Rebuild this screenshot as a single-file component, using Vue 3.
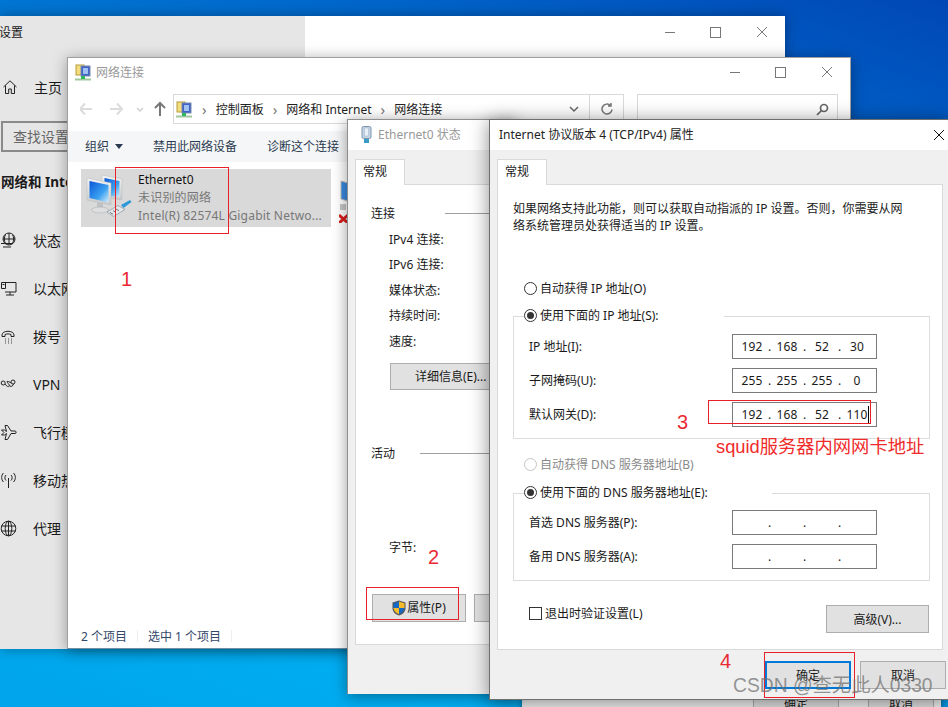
<script setup>
const navItems = [
  { label: '状态', icon: 'status' },
  { label: '以太网', icon: 'eth' },
  { label: '拨号', icon: 'dial' },
  { label: 'VPN', icon: 'vpn' },
  { label: '飞行模式', icon: 'plane' },
  { label: '移动热点', icon: 'hot' },
  { label: '代理', icon: 'globe' },
]
const statusRows = ['IPv4 连接:', 'IPv6 连接:', '媒体状态:', '持续时间:', '速度:']
const ipRows = [
  { label: 'IP 地址(I):', parts: ['192', '168', '52', '30'] },
  { label: '子网掩码(U):', parts: ['255', '255', '255', '0'] },
  { label: '默认网关(D):', parts: ['192', '168', '52', '110'], caret: true },
]
const dnsRows = [
  { label: '首选 DNS 服务器(P):', parts: ['', '', '', ''] },
  { label: '备用 DNS 服务器(A):', parts: ['', '', '', ''] },
]
</script>

<template>
  <div class="desktop">
    <!-- Settings window -->
    <section class="win settings">
      <aside class="side">
        <div class="side-title">设置</div>
        <div class="home">
          <svg width="16" height="16" viewBox="0 0 16 16" fill="none" stroke="#222" stroke-width="1"><path d="M1.5 8 8 1.8 14.5 8M3.5 6.5v8h3.2v-4.5h2.6v4.5h3.2v-8"/></svg>
          <span>主页</span>
        </div>
        <div class="find">查找设置</div>
        <div class="side-head">网络和 Internet</div>
        <div class="side-list">
          <div v-for="n in navItems" :key="n.label" class="side-item">
            <svg width="17" height="17" viewBox="0 0 17 17" fill="none" stroke="#222" stroke-width="1">
              <template v-if="n.icon === 'status'"><circle cx="9" cy="7" r="6"/><path d="M3 7h12M9 1v12M5.500 2.500c-1.500 3-1.500 6 0 9M12.500 2.500c1.500 3 1.500 6 0 9M1 11.500h12M3 15h8"/></template>
              <template v-else-if="n.icon === 'eth'"><path d="M5 2.500h11v9.500H5M1.500 2.500h4v6h-4zM10 12v3M6 15h8M2.500 4.500h2"/></template>
              <template v-else-if="n.icon === 'dial'"><path d="M2 7c0-5 12-5 12 0v1.500h-3V6.500c-1.500-.8-4.500-.8-6 0v2H2z"/><path d="M5 11h1M8 11h1M11 11h1M5 13h1M8 13h1M11 13h1M5 15h1M8 15h1M11 15h1" stroke="#444"/></template>
              <template v-else-if="n.icon === 'vpn'"><circle cx="3.200" cy="7" r="2"/><circle cx="13" cy="6" r="2"/><path d="M5 8c2 3 4 3 4.500 2S6.500 6 7 5.500s3 .5 4 1.500M10 10c1 1 3 0 3.500-2"/></template>
              <template v-else-if="n.icon === 'plane'"><path d="M1.500 6 4 8.500 1.500 11h3l2-1.500-1.500 6h2.500l3.500-6H15c1.500 0 1.500-2.500 0-2.500h-4L7.500 1.500H5l1.500 6-2-1.500z"/></template>
              <template v-else-if="n.icon === 'hot'"><path d="M8.500 6v10M6 3c-1.500 1.500-1.500 4 0 5.500M11 3c1.500 1.500 1.500 4 0 5.500M3.500 1C1 3.500 1 7.500 3.500 10M13.500 1c2.500 2.500 2.500 6.500 0 9"/></template>
              <template v-else><circle cx="8.500" cy="8.500" r="7.300"/><ellipse cx="8.500" cy="8.500" rx="3.300" ry="7.300"/><path d="M1.200 6h14.600M1.200 11h14.600M8.500 1.200v14.600"/></template>
            </svg>
            <span>{{ n.label }}</span>
          </div>
        </div>
      </aside>
      <div class="settings-main">
        <div class="controls">
          <i class="c-min"></i><i class="c-max"></i>
          <svg class="c-x" width="12" height="12" viewBox="0 0 12 12" stroke="#777" fill="none"><path d="M1 1l10 10M11 1 1 11"/></svg>
        </div>
      </div>
    </section>

    <!-- Network connections window -->
    <section class="win network">
      <header class="net-title">
        <svg width="17" height="17" viewBox="0 0 17 17">
          <rect x="1" y="1" width="8" height="10" fill="#f3dd7c" stroke="#b89c3a"/>
          <rect x="6" y="2" width="9" height="10" fill="#3f62c4" stroke="#7a8ab0"/>
          <rect x="8" y="4" width="5" height="6" fill="#9fc2f2"/>
          <path d="M0 15.500h16" stroke="#9ec79e" stroke-width="2"/>
          <rect x="6" y="12" width="4" height="3" fill="#2eb85c"/>
        </svg>
        <span>网络连接</span>
        <div class="controls net-controls">
          <i class="c-min"></i><i class="c-max"></i>
          <svg class="c-x" width="12" height="12" viewBox="0 0 12 12" stroke="#777" fill="none"><path d="M1 1l10 10M11 1 1 11"/></svg>
        </div>
      </header>
      <div class="net-nav">
        <svg class="nav-arrows" width="90" height="16" viewBox="0 0 90 16" fill="none">
          <path d="M0 8h12M5 2.500 0 8l5 5.500" stroke="#dcdcdc" stroke-width="2"/>
          <path d="M30 8h12M37 2.500 42 8l-5 5.500" stroke="#dcdcdc" stroke-width="2"/>
          <path d="m57 7 3 3 3-3" stroke="#d0d0d0" stroke-width="1.500"/>
          <path d="M80 15V2M75 7l5-5 5 5" stroke="#777" stroke-width="2"/>
        </svg>
        <div class="address">
          <svg width="17" height="17" viewBox="0 0 17 17">
            <rect x="1" y="1" width="8" height="10" fill="#f3dd7c" stroke="#b89c3a"/>
            <rect x="6" y="2" width="9" height="10" fill="#3f62c4" stroke="#7a8ab0"/>
            <rect x="8" y="4" width="5" height="6" fill="#9fc2f2"/>
            <path d="M0 15.500h16" stroke="#9ec79e" stroke-width="2"/>
            <rect x="6" y="12" width="4" height="3" fill="#2eb85c"/>
          </svg>
          <span class="crumb-sep">›</span><span>控制面板</span>
          <span class="crumb-sep">›</span><span>网络和 Internet</span>
          <span class="crumb-sep">›</span><span>网络连接</span>
          <svg class="addr-chev" width="10" height="7" viewBox="0 0 10 7" fill="none" stroke="#666" stroke-width="1.500"><path d="m1 1 4 4 4-4"/></svg>
          <div class="refresh">
            <svg width="12" height="13" viewBox="0 0 12 13" fill="none" stroke="#777" stroke-width="1.500"><path d="M9.500 2.500A5 5 0 1 0 11 6.500M10 0v3H7"/></svg>
          </div>
        </div>
        <div class="net-search">
          <svg width="13" height="13" viewBox="0 0 13 13" fill="none" stroke="#666" stroke-width="1.700"><circle cx="8" cy="5" r="3.500"/><path d="M5.500 7.500 1 12"/></svg>
        </div>
      </div>
      <div class="toolbar">
        <span class="tool-a">组织 <i class="caret-down"></i></span>
        <span class="tool-b">禁用此网络设备</span>
        <span>诊断这个连接</span>
      </div>
      <div class="net-list">
        <div class="adapter">
          <svg width="50" height="50" viewBox="0 0 50 50">
            <defs>
              <linearGradient id="scr" x1="0" y1="0" x2="1" y2="1"><stop offset="0" stop-color="#0a57d8"/><stop offset=".6" stop-color="#3aa0f0"/><stop offset="1" stop-color="#d4eefc"/></linearGradient>
              <linearGradient id="frame" x1="0" y1="0" x2="0" y2="1"><stop offset="0" stop-color="#f2f3f4"/><stop offset="1" stop-color="#c6c9cc"/></linearGradient>
            </defs>
            <path d="M18 2 38 6v21l-20-3z" fill="url(#frame)" stroke="#b5b8bb" stroke-width=".5"/>
            <path d="M20.500 5l15 3v16l-15-2z" fill="url(#scr)"/>
            <path d="M3 5 27 10v22L3 27z" fill="url(#frame)" stroke="#b5b8bb" stroke-width=".5"/>
            <path d="M5.500 8l19 4v17.500L5.500 25z" fill="url(#scr)"/>
            <path d="M13 30h6v6h-6z" fill="#bfc2c5"/>
            <ellipse cx="16" cy="37" rx="8.500" ry="3" fill="#dcdedf" stroke="#a9abae" stroke-width=".5"/>
            <path d="m23 39 11-6.500 7 4-11.500 7z" fill="#e4e7ea" stroke="#8a949c" stroke-width=".7"/>
            <path d="M26 39.500l3 1.700M29 37.700l3 1.700M32 36l3 1.700" stroke="#6f7a82"/>
            <path d="m37 32 9-5 1.500 2-8 6z" fill="#2d98d8"/>
          </svg>
          <div class="adapter-text">
            <div class="a-name">Ethernet0</div>
            <div class="a-sub">未识别的网络</div>
            <div class="a-sub">Intel(R) 82574L Gigabit Netwo...</div>
          </div>
        </div>
        <div class="adapter-two">
          <svg width="12" height="50" viewBox="0 0 12 50">
            <path d="M2 8 12 11v18L2 26z" fill="#3a8ae0" stroke="#bbb"/>
            <path d="M0 42 9 50M9 42 0 50" stroke="#d81e1e" stroke-width="3"/>
            <rect x="1" y="31" width="6" height="6" fill="#c4c6c8"/>
          </svg>
        </div>
      </div>
      <footer class="net-foot">
        <span>2 个项目</span><b></b><span>选中 1 个项目</span><b></b>
      </footer>
    </section>

    <!-- Window behind the dialogs, only its button strip is visible -->
    <section class="win backdlg">
      <div class="back-btn back-ok">确定</div>
      <div class="back-btn back-no">取消</div>
    </section>

    <!-- Ethernet status -->
    <section class="win status">
      <header class="dlg-title">
        <svg width="13" height="17" viewBox="0 0 13 17"><rect x="2" y="0.500" width="9" height="12" rx="1.500" fill="#c3d4e4" stroke="#7f96ad"/><rect x="4.500" y="2" width="4" height="8" fill="#e7f0f8" stroke="#9fb2c4" stroke-width=".5"/><rect x="4" y="13" width="5" height="4" fill="#3a9ac8"/></svg>
        <span>Ethernet0 状态</span>
      </header>
      <div class="dlg-body">
        <div class="tab">常规</div>
        <div class="panel status-panel">
          <div class="legend-line conn"><span>连接</span><i></i></div>
          <div class="stat-rows">
            <div v-for="r in statusRows" :key="r">{{ r }}</div>
          </div>
          <div class="btn detail">详细信息(E)...</div>
          <div class="legend-line act"><span>活动</span><i></i></div>
          <div class="bytes">字节:</div>
          <div class="stat-btns">
            <div class="btn prop">
              <svg width="14" height="16" viewBox="0 0 14 16">
                <path d="M7 .5 13.500 2.500V8c0 4-3 6.500-6.500 7.500C3.500 14.500.5 12 .5 8V2.500z" fill="#555"/>
                <path d="M7 1.500V8H1.500V3.200z" fill="#1668c4"/>
                <path d="M7 1.500 12.500 3.200V8H7z" fill="#f4bb2a"/>
                <path d="M7 8h5.500c0 3-2.500 5-5.500 6.300z" fill="#1668c4"/>
                <path d="M7 8v6.300C4 13 1.500 11 1.500 8z" fill="#f4bb2a"/>
              </svg>
              <span>属性(P)</span>
            </div>
            <div class="btn prop"></div>
          </div>
        </div>
      </div>
    </section>

    <!-- TCP/IPv4 properties -->
    <section class="win tcp">
      <header class="dlg-title tcp-title">
        <span>Internet 协议版本 4 (TCP/IPv4) 属性</span>
        <svg width="12" height="12" viewBox="0 0 12 12" stroke="#111" fill="none"><path d="M1 1l10 10M11 1 1 11"/></svg>
      </header>
      <div class="dlg-body tcp-body">
        <div class="tab">常规</div>
        <div class="panel tcp-panel">
          <p class="intro">如果网络支持此功能，则可以获取自动指派的 IP 设置。否则，你需要从网<br>络系统管理员处获得适当的 IP 设置。</p>

          <label class="radio-row auto-ip"><i class="radio"></i><span>自动获得 IP 地址(O)</span></label>
          <div class="group ip-group">
            <label class="radio-row legend"><i class="radio on"></i><span>使用下面的 IP 地址(S):</span></label>
            <div class="rows">
              <div v-for="r in ipRows" :key="r.label" class="row">
                <span>{{ r.label }}</span>
                <div class="ip">
                  <template v-for="(p, i) in r.parts" :key="i">
                    <span class="cell">{{ p }}</span><span v-if="i < 3" class="dot">.</span>
                  </template>
                  <i v-if="r.caret" class="text-caret"></i>
                </div>
              </div>
            </div>
          </div>

          <label class="radio-row auto-dns disabled"><i class="radio"></i><span>自动获得 DNS 服务器地址(B)</span></label>
          <div class="group dns-group">
            <label class="radio-row legend"><i class="radio on"></i><span>使用下面的 DNS 服务器地址(E):</span></label>
            <div class="rows">
              <div v-for="r in dnsRows" :key="r.label" class="row">
                <span>{{ r.label }}</span>
                <div class="ip">
                  <template v-for="(p, i) in r.parts" :key="i">
                    <span class="cell">{{ p }}</span><span v-if="i < 3" class="dot">.</span>
                  </template>
                </div>
              </div>
            </div>
          </div>

          <div class="verify">
            <label class="check"><i></i><span>退出时验证设置(L)</span></label>
            <div class="btn adv">高级(V)...</div>
          </div>
        </div>
        <footer class="tcp-foot">
          <div class="btn foot ok">确定</div>
          <div class="btn foot">取消</div>
        </footer>
      </div>
    </section>

    <!-- Red annotations drawn over the screenshot -->
    <i class="mark m1"></i>
    <i class="mark m2"></i>
    <i class="mark m3"></i>
    <i class="mark m4"></i>
    <span class="num n1">1</span>
    <span class="num n2">2</span>
    <span class="num n3">3</span>
    <span class="num n4">4</span>
    <span class="note">squid服务器内网网卡地址</span>
    <span class="watermark">CSDN @查无此人0330</span>
  </div>
</template>

<style>
html, body { margin: 0; padding: 0; }
</style>

<style scoped>
.desktop {
  position: relative;
  width: 948px;
  height: 707px;
  overflow: hidden;
  background: linear-gradient(200deg, #0047b5 0%, #0068cc 22%, #0090e0 55%, #00acf0 85%, #00a4ea 100%);
  font-family: "Noto Sans", "Noto Sans CJK SC", sans-serif;
  font-size: 12px;
  line-height: 17px;
  color: #1a1a1a;
}
.desktop i { display: block; font-style: normal; }
.win { position: absolute; box-sizing: border-box; }

/* Settings */
.settings { left: 0; top: 16px; width: 785px; height: 633px; display: flex; box-shadow: 0 0 12px rgba(0,0,0,.35); }
.side { width: 305px; background: #e6e6e6; box-sizing: border-box; flex: none; overflow: hidden; }
.side-title { margin: 8px 0 0 -1px; font-size: 12px; line-height: 17px; }
.home { display: flex; align-items: center; margin-top: 36px; height: 20px; font-size: 14px; padding-left: 2px; }
.home span { margin-left: 16px; }
.find { margin: 24px 0 0 1px; height: 27px; width: 260px; border: 2px solid #8a8a8a; padding-left: 10px; font-size: 14px; line-height: 27px; color: #666; }
.side-head { margin: 20px 0 0 1px; font-size: 13.500px; font-weight: 700; line-height: 20px; white-space: nowrap; }
.side-list { margin-top: 24px; }
.side-item { display: flex; align-items: center; height: 48px; font-size: 14px; white-space: nowrap; }
.side-item svg { margin: 0 16px 0 0; flex: none; }
.settings-main { flex: 1; background: #fff; position: relative; }
.controls { display: flex; justify-content: flex-end; align-items: center; height: 32px; padding-right: 17px; gap: 35px; }
.c-min { width: 10px; height: 1px; background: #777; }
.c-max { width: 9px; height: 9px; border: 1px solid #777; }

/* Network window */
.network { left: 67px; top: 57px; width: 784px; height: 592px; background: #fff; border: 1px solid #a0a0a0; border-bottom-color: #6e8fa5; display: flex; flex-direction: column; box-shadow: 0 2px 14px rgba(0,0,0,.35); }
.net-title { display: flex; align-items: center; height: 28px; padding-left: 7px; color: #999; flex: none; }
.net-title span { margin-left: 4px; }
.net-controls { margin-left: auto; height: 28px; padding-right: 17px; }
.net-nav { display: flex; align-items: center; height: 30px; margin-top: 8px; flex: none; }
.nav-arrows { margin-left: 12px; flex: none; }
.address { display: flex; align-items: center; width: 447px; height: 28px; border: 1px solid #d9d9d9; margin-left: 3px; padding-left: 2px; box-sizing: content-box; position: relative; white-space: nowrap; }
.address > span { color: #222; }
.crumb-sep { color: #777 !important; margin: 0 9px; font-size: 15px; }
.addr-chev { position: absolute; right: 44px; top: 11px; }
.refresh { position: absolute; right: 0; top: 0; width: 33px; height: 28px; border-left: 1px solid #d9d9d9; display: flex; align-items: center; justify-content: center; }
.net-search { height: 28px; border: 1px solid #d9d9d9; margin-left: 13px; display: flex; align-items: center; justify-content: flex-end; padding-right: 8px; box-sizing: content-box; width: 191px; }
.toolbar { display: flex; align-items: center; height: 31px; margin-top: 7px; background: #f5f6f7; padding-left: 17px; color: #2a3a50; flex: none; white-space: nowrap; }
.tool-a { display: flex; align-items: center; width: 68px; }
.tool-b { width: 114px; }
.caret-down { width: 0; height: 0; margin-left: 6px; border: 4px solid transparent; border-top: 5px solid #2a3a50; border-bottom: 0; }
.net-list { flex: 1; display: flex; padding: 7px 0 0 13px; align-items: flex-start; }
.adapter { width: 250px; height: 58px; background: #d9d9d9; display: flex; align-items: center; padding-left: 3px; box-sizing: border-box; flex: none; }
.adapter svg { flex: none; }
.adapter-text { margin-left: 4px; line-height: 18px; white-space: nowrap; }
.a-name { color: #111; }
.a-sub { color: #777; letter-spacing: .2px; }
.adapter-two { margin-left: 8px; height: 58px; display: flex; align-items: center; }
.net-foot { display: flex; align-items: center; height: 24px; padding-left: 13px; color: #33476a; flex: none; white-space: nowrap; }
.net-foot b { width: 1px; height: 12px; background: #eee; margin: 0 10px; }

/* Behind window */
.backdlg { left: 522px; top: 650px; width: 419px; height: 80px; background: #f0f0f0; box-shadow: 0 0 6px rgba(0,0,0,.4); display: flex; padding: 40px 0 0 231px; gap: 29px; }
.back-btn { width: 84px; height: 26px; border: 1px solid #adadad; background: #e1e1e1; text-align: center; line-height: 26px; flex: none; }
.back-no { width: 64px; }

/* Dialog basics */
.dlg-title { display: flex; align-items: center; height: 29px; padding-bottom: 1px; box-sizing: content-box; background: #fff; padding-left: 12px; color: #999; }
.dlg-title span { margin-left: 5px; }
.dlg-body { background: #f0f0f0; padding: 9px 0 0 7px; box-sizing: border-box; }
.tab { width: 50px; height: 26px; margin-bottom: -1px; background: #fff; border: 1px solid #d9d9d9; border-bottom: 0; box-sizing: border-box; line-height: 24px; padding-left: 7px; position: relative; z-index: 1; }
.panel { background: #fff; border: 1px solid #d9d9d9; box-sizing: border-box; }
.btn { background: #e1e1e1; border: 1px solid #adadad; box-sizing: border-box; display: flex; align-items: center; justify-content: center; white-space: nowrap; }

/* Status */
.status { left: 347px; top: 119px; width: 170px; height: 575px; border: 1px solid #8f8f8f; box-shadow: 0 2px 14px rgba(0,0,0,.4); background: #f0f0f0; }
.status .dlg-body { height: 544px; }
.status-panel { width: 200px; height: 461px; padding: 20px 0 0 15px; }
.legend-line { display: flex; align-items: center; white-space: nowrap; }
.legend-line span { flex: none; }
.legend-line i { height: 1px; background: #a0a0a0; flex: none; width: 120px; }
.conn i { margin-left: 50px; }
.act { margin-top: 55px; }
.act i { margin-left: 25px; }
.stat-rows { margin: 9px 0 0 18px; display: flex; flex-direction: column; gap: 8.400px; white-space: nowrap; }
.detail { width: 120px; height: 27px; margin: 13px 0 0 19px; justify-content: flex-start; padding-left: 24px; }
.bytes { margin: 77px 0 0 18px; }
.stat-btns { display: flex; gap: 8px; margin-top: 38px; margin-left: 1px; }
.prop { width: 94px; height: 28px; flex: none; gap: 1px; }

/* TCP */
.tcp { left: 489px; top: 119px; width: 462px; height: 581px; border: 1px solid #6f6f6f; box-shadow: 0 2px 18px rgba(0,0,0,.45); }
.tcp-title { color: #222; padding-left: 9px; justify-content: space-between; padding-right: 5px; }
.tcp-title span { margin-left: 0; }
.tcp-body { height: 549px; }
.tcp-panel { width: 446px; height: 466px; padding: 15px 0 0 15px; }
.intro { margin: 0; white-space: nowrap; color: #222; }
.radio-row { display: flex; align-items: center; height: 17px; white-space: nowrap; }
.radio { width: 11px; height: 11px; border: 1px solid #333; border-radius: 50%; margin-right: 3px; flex: none; position: relative; background: #fff; }
.radio.on::after { content: ""; position: absolute; left: 2px; top: 2px; width: 7px; height: 7px; border-radius: 50%; background: #333; }
.auto-ip { margin: 46px 0 0 11px; }
.group { width: 417px; border: 1px solid #dcdcdc; box-sizing: border-box; padding: 0 0 11px 15px; }
.ip-group { margin-top: 19px; }
.dns-group { margin-top: 20px; }
.legend { width: 200px; margin: -10px 0 10px -5px; background: #fff; }
.dns-group .legend { margin-bottom: 9px; width: 248px; }
.rows { display: flex; flex-direction: column; gap: 9px; }
.row { display: flex; align-items: center; height: 25px; white-space: nowrap; }
.row > span { width: 203px; flex: none; }
.ip { width: 145px; height: 25px; box-sizing: border-box; border: 1px solid #7a7a7a; display: flex; align-items: center; padding-left: 4px; position: relative; background: #fff; }
.cell { width: 30px; text-align: center; flex: none; letter-spacing: .2px; }
.dot { width: 5px; text-align: center; flex: none; }
.text-caret { position: absolute; left: 135px; top: 3px; width: 1px; height: 17px; background: #000; }
.auto-dns { margin: 17px 0 0 11px; }
.disabled { color: #8a8a8a; }
.disabled .radio { border-color: #c4c4c4; }
.verify { width: 417px; display: flex; justify-content: space-between; align-items: flex-start; margin-top: 24px; padding: 0 1px 0 16px; box-sizing: border-box; }
.check { display: flex; align-items: center; }
.check i { width: 11px; height: 11px; border: 1px solid #333; margin-right: 3px; }
.adv { width: 103px; height: 28px; }
.tcp-foot { display: flex; justify-content: flex-end; gap: 9px; margin-top: 11px; width: 449px; }
.foot { width: 86px; height: 28px; }
.ok { border: 2px solid #0078d7; }

/* Annotations */
.mark { position: absolute; box-sizing: border-box; border: 1px solid #e8202a; }
.m1 { left: 115px; top: 167px; width: 114px; height: 67px; }
.m2 { left: 366px; top: 587px; width: 93px; height: 33px; }
.m3 { left: 708px; top: 400px; width: 163px; height: 24px; }
.m4 { left: 764px; top: 652px; width: 91px; height: 46px; }
.num { position: absolute; color: #ea2a33; font-size: 20px; line-height: 24px; font-family: "Liberation Sans", sans-serif; }
.n1 { left: 121px; top: 267px; }
.n2 { left: 428px; top: 545px; }
.n3 { left: 677px; top: 410px; }
.n4 { left: 720px; top: 649px; }
.note { position: absolute; left: 716px; top: 434px; font-size: 18.300px; line-height: 26px; color: #f02b2b; white-space: nowrap; font-family: "Liberation Sans", "Noto Sans CJK SC", sans-serif; }
.watermark { position: absolute; left: 733px; top: 673px; font-size: 19.300px; line-height: 26px; color: rgba(110,110,110,.72); white-space: nowrap; font-family: "Liberation Sans", "Noto Sans CJK SC", sans-serif; }
</style>
